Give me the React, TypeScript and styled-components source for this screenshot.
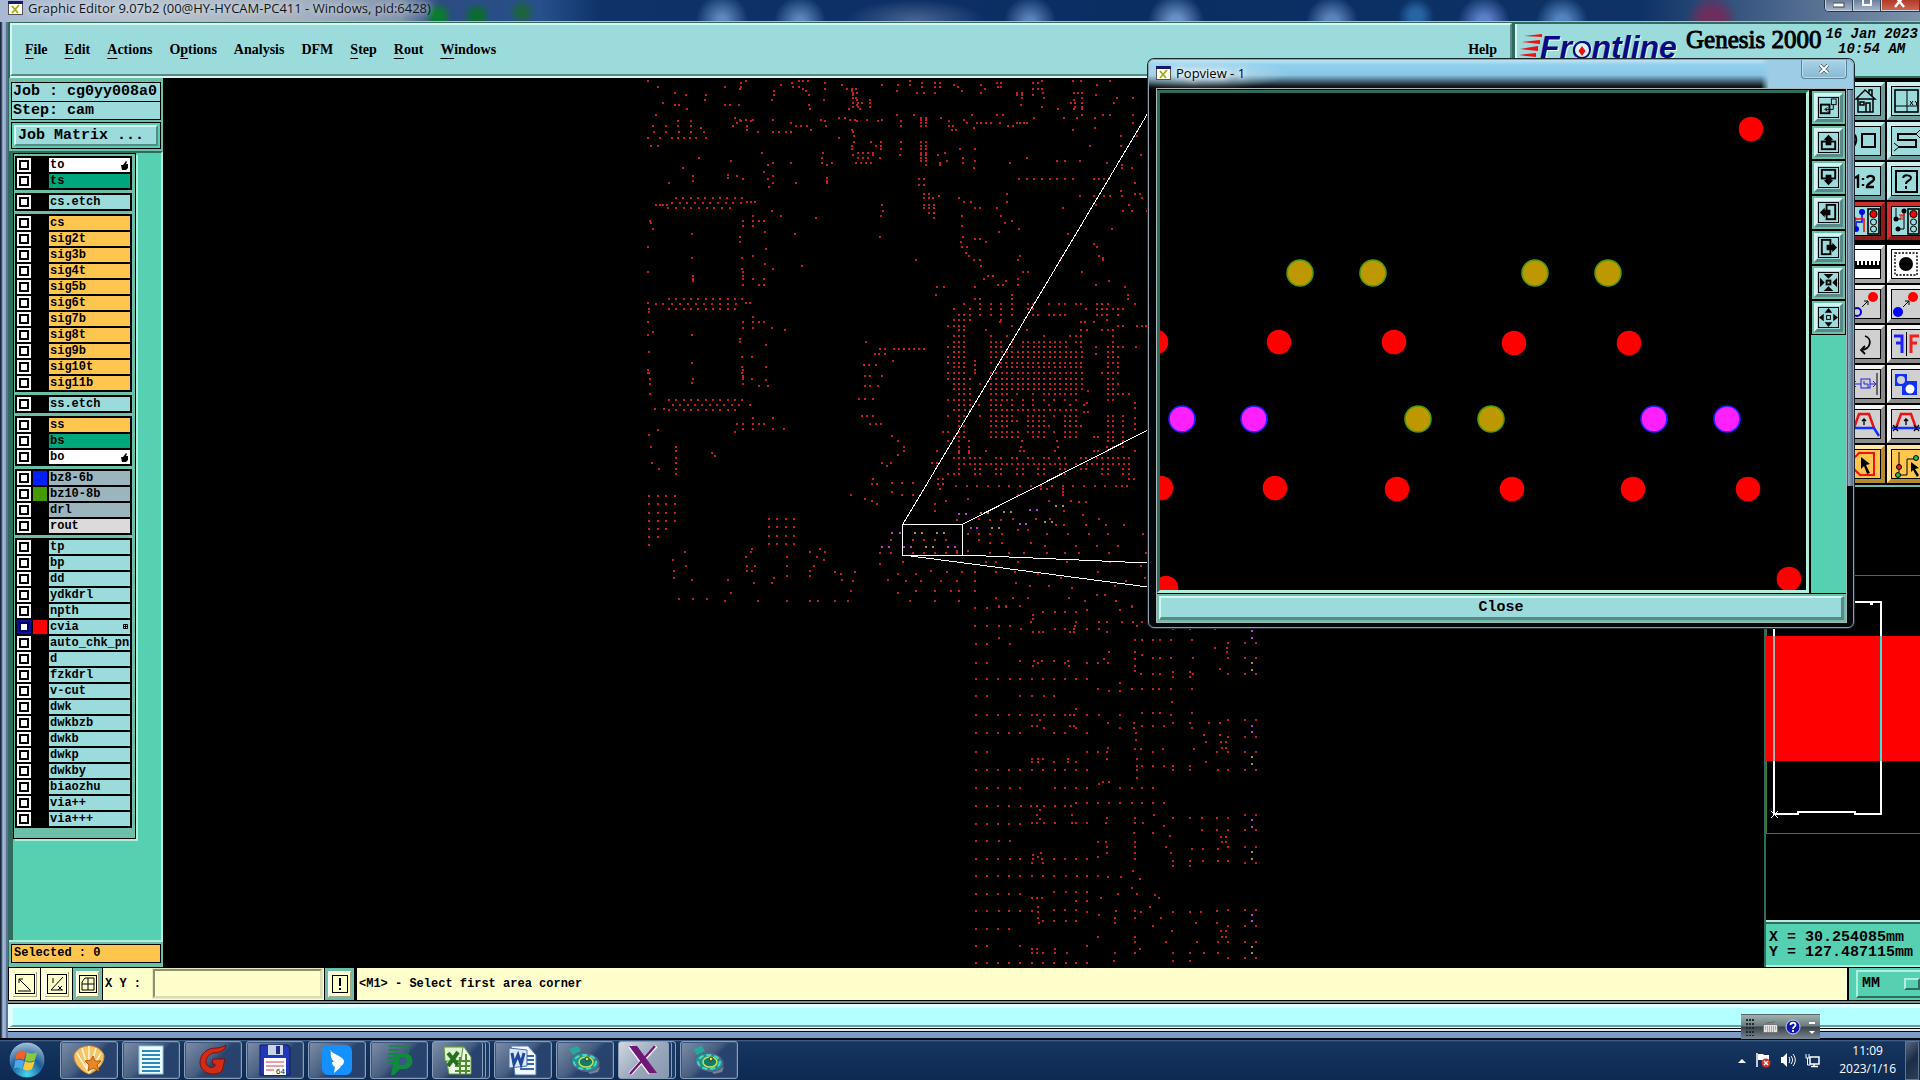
import React from "react";
import styled, { createGlobalStyle, css } from "styled-components";

const MONO = '"Liberation Mono", "DejaVu Sans Mono", monospace';
const SERIF = '"Liberation Serif", "DejaVu Serif", serif';
const SANS = '"Open Sans", "Noto Sans", sans-serif';

const c = {
  aqua: "#9bdbdb",
  aquaLight: "#d6f6f4",
  aquaDark: "#588888",
  green: "#55d0b0",
  greenMid: "#6cc0a8",
  greenLight: "#b2eede",
  greenDark: "#306c5e",
  orange: "#ffc64f",
  cream: "#ffffcc",
  grey: "#d0d0d0",
};

const Global = createGlobalStyle`
  * { box-sizing: border-box; }
  html, body { margin: 0; height: 100%; background: #0b2a55; overflow: hidden; }
  button, input, select { font: inherit; color: inherit; margin: 0; padding: 0; border: 0; border-radius: 0; background: none; }
  svg { display: block; flex: none; }
`;

const Desktop = styled.div`
  position: relative;
  height: 100vh;
  display: flex;
  flex-direction: column;
  overflow: hidden;
  color: #000;
`;

const EditorWindow = styled.main`
  flex: 1;
  min-height: 0;
  display: flex;
  flex-direction: column;
  padding: 0 0 6px 8px;
  background: linear-gradient(90deg, #1c2a40 0 1px, #a9bedb 3px, #86a0cb 6px, #3a4a60 7px, #7f9cc9 8px);
  border-bottom: 2px solid #050a14;
`;

const TitleBar = styled.header`
  height: 22px;
  flex: none;
  display: flex;
  align-items: flex-start;
  justify-content: space-between;
  margin-left: -8px;
  padding-left: 8px;
  border-bottom: 1px solid #a8bcd0;
  background:
    radial-gradient(circle at 438px 16px, #0c7a30 0 5px, transparent 14px),
    radial-gradient(circle at 477px 16px, #0c6a34 0 5px, transparent 14px),
    radial-gradient(circle at 522px 12px, #1c6440 0 4px, transparent 14px),
    radial-gradient(circle at 722px 20px, #6088bc 0 4px, transparent 26px),
    radial-gradient(circle at 800px 22px, #6088bc 0 4px, transparent 26px),
    radial-gradient(ellipse 70px 20px at 915px 20px, #4a6494 0, transparent 100%),
    radial-gradient(circle at 1030px 22px, #5c84bc 0 4px, transparent 26px),
    radial-gradient(circle at 1176px 22px, #6890c4 0 6px, transparent 28px),
    radial-gradient(circle at 1332px 22px, #5c84bc 0 6px, transparent 26px),
    radial-gradient(circle at 1416px 16px, #2664a4 0 6px, transparent 18px),
    radial-gradient(circle at 1484px 22px, #5c80c8 0 6px, transparent 26px),
    radial-gradient(circle at 1562px 22px, #5484c0 0 6px, transparent 26px),
    radial-gradient(circle at 1712px 20px, #6c2e5c 0 10px, transparent 26px),
    linear-gradient(90deg, #a9b9d4 0, #b8c3cf 140px, #a4b2c0 300px, #8494ac 400px, #2c4c80 440px, #27508c 540px, #0f3368 600px, #0a2e62 1150px, #0d3266 1640px, #5d7696 1830px, #7d93ac 100%);
`;

const TitleText = styled.div`
  display: flex;
  align-items: center;
  gap: 5px;
  height: 16px;
  font: 13px/16px ${SANS};
  color: #10161e;
  text-shadow: 0 0 6px #fff;
`;

const WindowControls = styled.div`
  display: flex;
  height: 12px;
  border: 1px solid #26364c;
  border-top: 0;
  border-right: 0;
  border-radius: 0 0 0 5px;
  overflow: hidden;
`;

const WindowControl = styled.button<{ $close?: boolean }>`
  width: ${(p) => (p.$close ? 39 : 28)}px;
  display: flex;
  justify-content: center;
  border-right: 1px solid #33445c;
  box-shadow: inset 1px -1px 0 #c4d0e0;
  background: ${(p) => (p.$close ? "linear-gradient(#b03a28, #d06a50)" : "linear-gradient(#6c809c, #a8b8cc)")};
`;

const Header = styled.div`
  height: 56px;
  flex: none;
  display: flex;
  background: ${c.greenDark};
`;

const raised = css`
  border-style: solid;
  border-width: 2px;
  border-color: ${c.aquaLight} ${c.aquaDark} ${c.aquaDark} ${c.aquaLight};
`;

const MenuBar = styled.nav`
  flex: 1;
  display: flex;
  align-items: center;
  gap: 17px;
  padding: 0 13px;
  background: ${c.aqua};
  ${raised}
  box-shadow: 0 2px 0 ${c.aquaLight};
  margin: 1px 2px 2px;
`;

const MenuItem = styled.button<{ $end?: boolean }>`
  font: bold 14px/20px ${SERIF};
  margin-left: ${(p) => (p.$end ? "auto" : 0)};
  u { text-underline-offset: 4px; text-decoration-thickness: 1px; }
`;

const Brand = styled.div`
  width: 405px;
  flex: none;
  margin: 2px 0 2px 1px;
  display: flex;
  align-items: flex-start;
  padding: 2px 0 0 2px;
  gap: 4px;
  background: ${c.aqua};
  border-left: 2px solid ${c.aquaLight};
  overflow: hidden;
`;

const Product = styled.div`
  font: 25px/28px ${SERIF};
  -webkit-text-stroke: 1px #000;
  white-space: nowrap;
`;

const Stamp = styled.div`
  font: italic bold 14px/15px ${MONO};
  white-space: nowrap;
  text-align: center;
  flex: none;
  padding-top: 1px;
`;

const Body = styled.div`
  flex: 1;
  min-height: 0;
  display: flex;
  background: #000;
`;

const Side = styled.aside`
  width: 155px;
  flex: none;
  display: flex;
  flex-direction: column;
  padding-top: 2px;
  background: ${c.greenMid};
  border-left: 1px solid ${c.greenDark};
`;

const JobInfo = styled.div`
  margin: 2px 2px 0;
  border: 1px solid #000;
  font: bold 15px/18px ${MONO};
  background: ${c.aqua};
`;

const JobLine = styled.div`
  height: 18px;
  padding-left: 1px;
  white-space: pre;
  overflow: hidden;
  & + & { border-top: 1px solid #000; }
`;

const MatrixFrame = styled.div`
  margin: 2px;
  padding: 2px;
  border: 1px solid #000;
  background: ${c.green};
`;

const MatrixButton = styled.button`
  display: block;
  width: 100%;
  height: 21px;
  text-align: left;
  padding-left: 2px;
  font: bold 15px/17px ${MONO};
  background: ${c.aqua};
  ${raised}
`;

const LayerArea = styled.div`
  flex: 1;
  min-height: 0;
  padding-left: 4px;
  background: linear-gradient(90deg, ${c.greenDark} 0 4px, ${c.green} 4px);
  border-top: 2px solid ${c.greenDark};
  border-right: 2px solid ${c.greenLight};
  border-bottom: 2px solid ${c.greenLight};
`;

const LayerPanel = styled.div`
  width: 123px;
  display: flex;
  flex-direction: column;
  gap: 3px;
  padding: 2px 2px 10px 1px;
  border: 1px solid #000;
  background: ${c.greenMid};
  box-shadow: 2px 2px 0 ${c.greenLight};
`;

const LayerGroup = styled.div`
  width: 117px;
  display: flex;
  flex-direction: column;
  gap: 2px;
  padding: 2px;
  background: #000;
`;

const LayerRow = styled.div`
  display: grid;
  grid-template-columns: 14px 14px 1fr;
  gap: 2px;
  height: 14px;
`;

const LayerTick = styled.input`
  appearance: none;
  width: 14px;
  height: 14px;
  background: #fff;
  border: 2px solid #fff;
  box-shadow: inset 0 0 0 2px #000;
  &:checked { border-color: #0a10a0; box-shadow: inset 0 0 0 2px #000060; }
`;

const Swatch = styled.span<{ $color?: string }>`
  background: ${(p) => p.$color || "#000"};
`;

const LayerName = styled.label<{ $bg: string }>`
  display: flex;
  justify-content: space-between;
  align-items: center;
  min-width: 0;
  height: 14px;
  padding-left: 1px;
  overflow: hidden;
  white-space: nowrap;
  font: bold 12px/14px ${MONO};
  background: ${(p) => p.$bg};
`;

const Selected = styled.div`
  height: 19px;
  margin: 2px 2px 4px;
  padding-left: 2px;
  border: 1px solid #000;
  font: bold 12px/17px ${MONO};
  background: ${c.orange};
`;

const Board = styled.section`
  flex: 1;
  min-width: 0;
  overflow: hidden;
  background: #000;
`;

const Dock = styled.aside`
  width: 156px;
  flex: none;
  display: flex;
  flex-direction: column;
  overflow: hidden;
  border-left: 2px solid ${c.greenDark};
`;

const ToolBox = styled.div`
  display: grid;
  grid-template-columns: 40px 40px;
  grid-auto-rows: 40px;
  padding: 4px 0 3px 81px;
  background: #000;
  border-bottom: 2px solid ${c.greenMid};
`;

const toneOf = {
  aqua: [c.aqua, "#c8f0ee", "#6c9c9c"],
  red: ["#9bdbdb", "#d03030", "#8c1c1c"],
  white: ["#ffffff", "#ffffff", "#a8a8a8"],
  grey: [c.grey, "#f4f4f4", "#8c8c8c"],
  orange: [c.orange, "#ffe6a8", "#b88a30"],
};
type Tone = keyof typeof toneOf;

const Tool = styled.button<{ $tone: Tone; $gap?: boolean }>`
  width: 38px;
  height: 38px;
  margin-top: ${(p) => (p.$gap ? 3 : 0)}px;
  border-style: solid;
  border-width: 4px;
  border-color: ${(p) => {
    const [, l, d] = toneOf[p.$tone];
    return `${l} ${d} ${d} ${l}`;
  }};
  background: ${(p) => toneOf[p.$tone][0]};
`;

const Overview = styled.div`
  flex: 1;
  min-height: 0;
  background: #000;
  overflow: hidden;
`;

const Coords = styled.div`
  height: 47px;
  flex: none;
  padding: 8px 0 0 3px;
  border-top: 2px solid ${c.greenLight};
  border-bottom: 2px solid ${c.greenLight};
  box-shadow: inset 0 2px 0 ${c.greenDark};
  background: ${c.green};
  font: bold 15px/15px ${MONO};
  white-space: pre;
`;

const CommandBar = styled.div`
  height: 34px;
  flex: none;
  display: flex;
  padding: 1px 0 1px 1px;
  gap: 1px;
  background: #000;
`;

const CommandButton = styled.button<{ $framed?: boolean }>`
  width: ${(p) => (p.$framed ? 29 : 31)}px;
  display: flex;
  align-items: center;
  justify-content: center;
  background: ${c.cream};
  border: 3px solid ${(p) => (p.$framed ? c.greenMid : c.cream)};
  box-shadow: inset 1px 1px 0 #fff, inset -1px -1px 0 #a8a888;
`;

const EntryField = styled.div`
  display: flex;
  width: 221px;
  background: ${c.cream};
  font: bold 12px/32px ${MONO};
  label { width: 48px; padding-left: 2px; }
  input {
    flex: 1;
    min-width: 0;
    margin: 1px 2px 2px 2px;
    padding-left: 4px;
    border-style: solid;
    border-width: 2px;
    border-color: #90906c #dcdcb4 #dcdcb4 #90906c;
    box-shadow: 0 0 0 1px #e8e8c0;
  }
`;

const Prompt = styled.div`
  flex: 1;
  margin-left: 2px;
  padding-left: 2px;
  font: bold 12px/32px ${MONO};
  background: ${c.cream};
`;

const UnitFrame = styled.div`
  width: 72px;
  padding: 2px 0 2px 7px;
  border-left: 1px solid #000;
  background: ${c.green};
`;

const UnitPick = styled.div`
  display: flex;
  align-items: center;
  height: 28px;
  border-style: solid;
  border-width: 2px 0 2px 2px;
  border-color: ${c.greenLight} ${c.greenDark} ${c.greenDark} ${c.greenLight};
  select {
    appearance: none;
    width: 48px;
    padding-left: 4px;
    font: bold 15px/20px ${MONO};
  }
  &::after {
    content: "";
    width: 13px;
    height: 8px;
    border-style: solid;
    border-width: 2px;
    border-color: ${c.greenLight} ${c.greenDark} ${c.greenDark} ${c.greenLight};
  }
`;

const MessageBar = styled.div`
  height: 31px;
  flex: none;
  padding: 3px 0 3px 1px;
  background: linear-gradient(#7d9494 0 2px, #000 2px 3px, #e2ffff 3px 27px, #000 27px 28px, #d2f2f2 28px 30px, #000 30px);
`;

const MessageField = styled.div`
  height: 23px;
  border-left: 4px solid #e2ffff;
  border-top: 4px solid #e2ffff;
  border-bottom: 2px solid #6a9c9c;
  background: #b4ffff;
`;

/* popview window */

const PopWindow = styled.section`
  position: absolute;
  left: 1148px;
  top: 59px;
  width: 706px;
  height: 569px;
  display: flex;
  flex-direction: column;
  padding: 0 6px 4px 7px;
  border: 1px solid #8ba0ac;
  border-radius: 6px;
  background:
    linear-gradient(90deg, transparent 0 698px, #8db0c8 699px, #5a6c80 100%) 0 30px / 100% 396px no-repeat,
    radial-gradient(ellipse 90px 16px at 50px 14px, #d8e8f0c0, transparent) no-repeat,
    linear-gradient(90deg, transparent 0 612px, #9ccce6 620px) 0 0 / 100% 29px no-repeat,
    linear-gradient(#bfe4f2 0, #8fd0ee 5px, #8ac6e4 15px, #50788c 20px, #14181c 26px, #000 30px, #08090c 100%);
  box-shadow: 0 0 0 1px #1c2830;
`;

const PopTitle = styled.header`
  height: 28px;
  flex: none;
  display: flex;
  justify-content: space-between;
  align-items: flex-start;
`;

const PopTitleText = styled.div`
  display: flex;
  align-items: center;
  gap: 5px;
  height: 26px;
  font: 13px/16px ${SANS};
  text-shadow: 0 0 5px #fff, 0 0 7px #fff, 0 0 8px #cfe6f0;
`;

const PopClose = styled.button`
  width: 46px;
  height: 19px;
  display: flex;
  align-items: center;
  justify-content: center;
  border: 1px solid #5f8296;
  border-top: 0;
  border-radius: 0 0 4px 4px;
  box-shadow: inset 0 0 0 1px #b8dcec;
  background: linear-gradient(#a8d4ea, #88b8d2);
`;

const PopContent = styled.div`
  flex: 1;
  min-height: 0;
  display: flex;
  flex-direction: column;
  border: 1px solid #a8b8b8;
  background: #000;
`;

const PopMain = styled.div`
  flex: 1;
  min-height: 0;
  display: flex;
  gap: 2px;
  padding-top: 1px;
`;

const PopView = styled.div`
  flex: 1;
  min-width: 0;
  border-style: solid;
  border-width: 3px;
  border-color: ${c.greenDark} ${c.greenLight} ${c.greenLight} ${c.greenDark};
  overflow: hidden;
`;

const PopTools = styled.div`
  width: 35px;
  background: ${c.green};
`;

const PopTool = styled.button`
  display: block;
  width: 35px;
  height: 35px;
  padding: 2px;
  border: 1px solid #000;
  background: ${c.greenMid};
  span {
    display: block;
    height: 29px;
    padding: 1px;
    border-style: solid;
    border-width: 3px;
    border-color: ${c.aquaLight} ${c.aquaDark} ${c.aquaDark} ${c.aquaLight};
    background: ${c.aqua};
  }
`;

const CloseFrame = styled.div`
  height: 28px;
  flex: none;
  margin-top: 1px;
  padding: 2px;
  background: ${c.greenMid};
  button {
    width: 100%;
    height: 24px;
    font: bold 15px/18px ${MONO};
    background: ${c.aqua};
    ${raised}
    border-right-width: 3px;
    border-bottom-width: 3px;
  }
`;

/* taskbar */

const Taskbar = styled.footer`
  height: 40px;
  flex: none;
  display: flex;
  align-items: center;
  background: linear-gradient(#4a6a92 0, #17365f 2px, #11305a 18px, #0d2a52 100%);
`;

const StartButton = styled.button`
  width: 60px;
  height: 40px;
  padding-left: 8px;
`;

const TaskList = styled.div`
  display: flex;
  gap: 4px;
  flex: 1;
`;

const TaskButton = styled.button<{ $active?: boolean; $stack?: boolean }>`
  width: 58px;
  height: 38px;
  display: flex;
  align-items: center;
  justify-content: center;
  border: 1px solid #8a9db8;
  border-radius: 3px;
  padding-right: ${(p) => (p.$stack ? 8 : 0)}px;
  box-shadow: ${(p) =>
    p.$stack
      ? "inset -3px 0 0 #1c3a62, inset -4px 0 0 #8a9db8, inset -6px 0 0 #1c3a62, inset -7px 0 0 #8a9db8"
      : "inset 0 0 0 1px #3c5578"};
  background: ${(p) =>
    p.$active
      ? "linear-gradient(135deg, #d2d8e2 0, #9aa8bc 50%, #8494ac 100%)"
      : "linear-gradient(135deg, #7d8fa8 0, #485f82 45%, #28446e 55%, #26426c 100%)"};
`;

const Tray = styled.div`
  display: flex;
  align-items: center;
  gap: 9px;
  padding-right: 18px;
`;

const Clock = styled.div`
  font: 12px/18px ${SANS};
  color: #fff;
  text-align: center;
  padding-right: 9px;
`;

const ShowDesktop = styled.button`
  width: 14px;
  height: 39px;
  margin-right: 1px;
  border: 1px solid #62748e;
  background: linear-gradient(135deg, #56687e, #1b2c46 50%, #2c3f5a);
`;

const LanguageBar = styled.div`
  position: absolute;
  right: 100px;
  bottom: 41px;
  width: 79px;
  height: 25px;
  display: flex;
  align-items: center;
  justify-content: space-between;
  padding: 0 5px;
  border-top: 1px solid #5c6868;
  background: linear-gradient(#a0b0b0 0, #6c7a7c 11px, #38434a 12px, #7c8690 100%);
`;

/* ---------- layer data ---------- */

type Layer = { name: string; bg?: string; color?: string; on?: boolean; mark?: "hand" | "grid" };
const O = c.orange;
const layerGroups: Layer[][] = [
  [{ name: "to", bg: "#fff", mark: "hand" }, { name: "ts", bg: "#00a67c" }],
  [{ name: "cs.etch" }],
  ["cs", "sig2t", "sig3b", "sig4t", "sig5b", "sig6t", "sig7b", "sig8t", "sig9b", "sig10t", "sig11b"].map((name) => ({ name, bg: O })),
  [{ name: "ss.etch" }],
  [{ name: "ss", bg: O }, { name: "bs", bg: "#00a67c" }, { name: "bo", bg: "#fff", mark: "hand" }],
  [
    { name: "bz8-6b", bg: "#9bb5be", color: "#0020ff" },
    { name: "bz10-8b", bg: "#9bb5be", color: "#459a04" },
    { name: "drl", bg: "#9bb5be" },
    { name: "rout", bg: "#dcdadb" },
  ],
  [
    { name: "tp" }, { name: "bp" }, { name: "dd" }, { name: "ydkdrl" }, { name: "npth" },
    { name: "cvia", color: "#ff0000", on: true, mark: "grid" },
    { name: "auto_chk_pnl" }, { name: "d" }, { name: "fzkdrl" }, { name: "v-cut" }, { name: "dwk" },
    { name: "dwkbzb" }, { name: "dwkb" }, { name: "dwkp" }, { name: "dwkby" }, { name: "biaozhu" },
    { name: "via++" }, { name: "via+++" },
  ],
];

/* ---------- drill data: "y: x x a-b/step" in third-of-a-pixel units ---------- */

const upper = `
3:24 318 478 490 505 810 1206 1299 1323 1410|10:303 457 555 846 885 900 1070 1083 1180 1194|16:423 606 727 773 810 942 1022 1371
21:54 255 303 459 476 846 885 900 954 1073 1083|26:300 488 555 620 636 648 1036 1180 1194 1206|33:403 497 636 770 965
39:105 640 651 831 851 885 1022 1131 1146 1209 1303 1315 1327|46:138 198 403 507 639 1131 1146 1180 1369|54:639 648 1146 1212 1327 1431 1479
61:195 396 552 651 690 1303|68:69 639 654 665 690 1293 1306 1327 1422|74:105 117 255 270 297 507 651 1143|80:639 654 690 1206 1306 1327
88:141 510 627 660 1254 1303 1327|106:48 770 822 996 1071 1089 1327 1389 1410 1479|113:285 597 615 842 857 903 1182 1272 1311 1365
119:300 318 339 399 543 630 645 680 726 842 857 972|124:114 153 303 333 555 651 713 782 927|129:291 453 842 857 981 1010-1064/14 1080 1131-1161/10 1479
138:39 78 114 153 279 320 468-500/16 558 782 842 857 927 939 1104 1118|144:183 1002 1365|150:320 512 636 935 948 1299
155:42 78 117 153 192 354 399 417 438 452 639|168:642 1443 1490|175:24 60 96-180/18 198 597|186:642 693 723 782 842 857
197:33 54 636 708 723 842 857 1350 1443|208:636 723 782 842 857 960 1005|218:366 549 654-700/15 842 857 915|226:639 698 780 842 857 893 1502
235:177 546 654-698/15 720 842 857 968 1161|242:273 843 857 921 1005 1250 1275 1320|249:399 453 546 576 648-693/15 900 968 1110 1401
256:384 561 857 900 1446|264:129 1002 1446 1476|275:372|284:264|289:158 291 399|293:264 561|297:309 384 1137-1300/23 1362-1410/15 837 852|302:158 561
308:87 399 468 561 1485|315:837 852|321:387|334:1443|342:852 867 1101 1485 1500|348:897 1320 1362 1392 1410 1446
354:108-310/22 852 867 879 956 1506|366:320 333 345 972 993 1101|369:96-312/23|375:48 60 69 81 852 867 882 726 1368 1467
384:84 108-290/23 852 867 882 1005 1020 1072 1269|393:396 729 1449 1476 1520|399:867 882|409:339 423 723 966 1083|415:528 882
422:30 309 339 357 372 1116|430:33 1095|439:309 339 966|448:39 1137 1416|455:375 1077|462:156 465 1284|470:300 720 969|478:1005 1020
485:300 963 1038|492:1362|501:24 966 981 1371|508:378|519:978|527:339 987 1140 1377|534:156 306 1263 1389|541:827 1002 1020 1134 1389
552:375|559:486 1022|566:306 399|576:24 309 1149 1164 1327|588:158 309 1044 1059|596:158 309 339 372 1032 1134|604:158 1098 1407
614:309 357 372 1074 1089 1134 1368|622:891 912 1005 1455|645:888 1116 1464|657:87-310/22 1005 1020 1116 1464|669:24 318 330
672:48 69 96-300/24 972 1020 1053 1083 1116 1164 1179 1227 1257 1275 1308 1323 1371 1386 1404 1485|687:27 87-290/22 942 990 1020 1053 1083 1116 1164 1179 1338 1371 1386 1401 1419 1434 1449
696:27|705:957 972 990 1020 1053 1083 1116 1179 1194 1227-1276/16 1371 1386 1401 1434|711:339|720:942 957 972 990 1083 1152 1401|727:24 309 339 357 372 1080 1323 1334 1362
738:924 942 957 972 1116 1434 1449 1490 1506 1518|744:309 339 396|751:435 957 972 1038 1161 1323 1341 1386 1404 1419|757:39|764:24 156
768:942 957 972 1053 1101 1212 1290 1308 1323 1419|776:300|786:300 678 942 957 972 1053 1068 1083 1116 1149-1290/16 1308 1323 1419|796:378
801:924 942 957 972 1053 1068 1083 1116 1149-1292/16 1323 1368 1404 1419 1434 1449 1488|807:720 735 762-865/15|815:27 942 957 972 1053-1325/16 1404 1419|823:705 717 735 1368
831:306 336 924 942 957 972 1053-1325/16 1404 1419 1434|843:759 1005|849:156 924 942 957 972 1053 1083-1325/16 1404 1419 1434|855:672 687 708 1005|862:306 378 942 957 972 1068-1325/16 1404 1434
870:24 309 1005|879:27 306 924 942 957 972 1005 1053-1325/16 1386 1404 1419 1434|889:309 675 690 727|897:30 158 336 942 957 972 1053-1325/16 1404 1419`;

const middle = `
9:24 306 942 957 972 1005 1053-1325/16 1386 1404 1419 1434|20:309|27:30 158 309 336 924 942 957 972 990 1053-1325/16 1404 1419|30:378|38:156
42:30 309 942 957 972 1020 1053-1325/16 1404 1419 1434|48:357 384 675 690 714|57:942-975/15 990 1053-1325/16 1404 1419|63:1344|72:30 957 972 990 1053-1102/16 1131 1179 1212-1292/16 1308 1404 1419 1434 1449 1467
87:657 675 699|90:87-310/22 924 942 957 972 990 1053-1118/16 1149 1179 1212 1242 1275 1308 1404 1419|99:1341 1485|104:99-315/22 330 957 972 990 1017 1053 1068 1083 1116 1149 1179 1227 1290 1332|114:1485
118:45 72|121:87-290/22 942-990/16 1053-1310/16|126:1332 1344|137:666 681 699 924 957 972 1020 1053-1118/16 1164-1212/16 1242 1275-1310/16 1404 1419 1449|145:339 399 1485
153:957 972 1053-1118/16 1131 1164-1214/16 1275-1310/16 1404 1419 1449|162:291 309 339 357 372 690 708 723 1485|168:957 972 1053-1102/16 1164-1228/16 1275-1325/16 1404 1419 1449|177:309 339 399 432 1485
181:54|187:285 909 924 957 972 1053-1134/16 1164-1214/16 1242 1275-1310/16 1404 1419 1449|195:27|198:756|202:942 957 972 1053-1134/16 1179-1214/16 1275-1310/16 1362 1374 1404 1419 1449
213:774 924 957 987 1146 1251 1404 1419 1449|231:33 108 792 957 987 1143 1254 1401 1419 1449|242:108 792 891 957 987 1038 1140 1152 1245 1362 1374 1401 1485|249:216 957 987|258:225|255:774
264:108 942 957-1036/16 1068 1083 1116 1131 1164 1179 1212 1227 1257 1275 1323-1468/16|278:36 108 727 753 876 891|283:957-1292/16 1308-1468/16|288:741 891
297:57 108 957 1005 1020 1068 1083 1131 1149 1194 1212 1260 1275 1323 1338 1386 1404 1449 1467|311:108 924 942 957 1005 1020 1068 1083 1131 1149 1194 1212 1260 1275 1386 1404 1449 1467
327:699 894 909 1467 1482|338:756 786 819|343:696 711 894 909|348:948-1467/32 1446|358:900 1203 1221 1269|367:756 1269|374:633 786 819 1134 1269
378:27 54 78 105|387:675 984|393:696 918 1227 1293|402:27 54 78 105 711 885|396:1317 1338|423:885 1272|429:27 54 78 105|435:1329|453:27 54 78 105|477:27 54 78|501:27 54|525:27
447:387 411 438 462 1017 1119 1188 1230 1377|451:951 1050 1083|471:387 411 438 462|498:387 411 438 462|522:387 411 438 462|464:1248 1272 1338 1398 1452|480:1134 1164
493:984 1017 1050 1086 1221 1284 1347 1404 1509|510:753 819 852 885 918 1017|519:1050 1086 1173|528:1215 1308 1371 1434|536:336 540|543:984 951|549:720 753 819 852 885 918 951 1050 1107 1152 1221 1275 1317 1407 1518
547:135 333 510 555|560:318 441 531|571:99 552|576:789 963 1038 1068 1134 1281 1410|582:720|587:138 321 345 441 522 1503|602:102 321 336 510 873|606:585 645 921 966 1005 1068 1125 1374|612:603 774 828 1194
618:441 510|624:102 402 1263 1515|630:156 264 606 744|633:639 798 843 903 951 1005 1458|640:342 396 1128|647:1170 1227 1425|654:1296|663:633 828 885 933 957 1005|668:273 774|674:1371 1395
684:1068 1119 1164 1288|688:117 159 201|692:255 354 441 510 534 585 624 810 885 957 1335 1428|711:1077 1098 1476|714:1005 1041`;

const lower = `
3:57 435|18:178 198 240 576|23:105 141|30:441 540|37:309 345 375 408|45:279|57:279|66:273 408 477 546 579 501 606|77:105 141 177 210 405 591|87:243 345 375 403 441 477 699 750 825
97:279 297 309 390 403 501|113:177|120:585 606 639 660 693 756|128:864 915 948|131:108 141 210|143:825 861|156:507 585 861|164:606|174:639 660 693 759 864 915 948|178:492 585
183:240 282 306 342 384|190:108 141 294 375 441 474 504|197:279 387 585|207:840|213:585|217:699 750|223:603 639 660 759 864 915 948|231:699 750|238:108 141 174 210 240 276 309 342 375 408 441
249:540|267:474 576 606 639 657 693 756|272:507 540|289:108 141 240 276 312 342|306:696|327:408|338:606 639 660 756|345:108 141 174 207 240 276 291 312 342 375 390 402 441 477 540 693
361:300 864 915 948|370:504 582 699 750 807 840|377:276 291 390 402 606 639 672|385:312 408 540 582 756|400:108 141 174 207 240 342 375 441 588|405:792 840|411:864 915 948|420:588|427:798 843 858
443:504 846 858|447:585 603 669 762|457:108 141 441 474 501 639 831 864 915 948|476:276 294 309 384 501 591|487:276 294 342 384 408 798|499:591 606 639 672 699 750|511:108 141 174 207 240 276 309 345 375 408 441 591 699 750 834 864 915 948
533:591|547:489 507|551:477|565:108 141 174 210 240 345 375 408 441 540 576 606 639|609:408 441 474 507 540 576 606 639 672|617:108 141 174 207 243 273 291 312 345 375 393|630:300|645:291 396 642 915 948
653:501 585 699 750 786 831 864|658:300|669:276 291 312 345 396 408 441 498 585 609|672:108 141 174 207 240|678:672|689:786 831 864 915 948|700:582 639|708:690|712:843 858|726:846 858 474 498 585|722:108 141 177 210
741:501 585 678 864 915 948|748:756 789 834|758:303 501 585 693|765:279|771:294 474|778:108 141 174 210 240 279 306 342 375 408 441 585|784:699 750 789 834 864|790:276 309 915 948|798:699 750|812:579
828:108 141 174 207 240 276 309 342 378 411 441 474|832:504 543|837:600|864:576|875:342 378 408 441|881:108 141 174 207 240 534 591|885:645|894:276 291 306 483 657|903:408 441|920:294 630
929:342 375 408 864 915 948|933:108 141 177 207 240 276 528 585 831|937:294 441 603 699 750 783|945:477|954:294 525 585 663|963:309 342 378 408|969:297 525 768 831|979:639 864 915 948|986:108 141 174 207
992:696 843 858|1010:474 585 846 858|1026:585 678 770 834 864 915 948|1038:108 141 240 441|1046:276 291 345 600|1060:276 291 309 345 381 525 585 699 750 792 834|1075:864 915 948|1082:522 699 750
1089:108 141 174 207 240 276 309 342 378 408 441`;

const plot = (src: string, ox: number, oy: number) => {
  let d = "";
  src.trim().split(/[|\n]/).forEach((row) => {
    const [y, xs] = row.split(":");
    xs.trim().split(/\s+/).forEach((t) => {
      const m = t.match(/^(\d+)-(\d+)\/(\d+)$/);
      const list: number[] = [];
      if (m) for (let v = +m[1]; v <= +m[2]; v += +m[3]) list.push(v);
      else list.push(+t);
      list.forEach((x) => {
        d += `M${Math.round(ox + x / 3) - 1} ${Math.round(oy + +y / 3) - 1}h2v2h-2z`;
      });
    });
  });
  return d;
};

const redDots = plot(upper, 640, 80) + plot(middle, 640, 370) + plot(lower, 940, 600);
const magentaDots =
  plot("489:757 780|531:726 747 792 813 924 945|431:957 978|474:993 1011|462:1140 1158|421:1170 1191", 640, 370) +
  plot("93:936|114:936|378:936|396:936|660:936|681:936|945:936|963:936", 940, 600);
const goldDots =
  plot("489:825 846 891 912|531:858 879|430:1022 1044|426:1092 1113|474:1056 1077|456:1215 1236|408:1248 1269", 640, 370) +
  plot("189:936|210:936|472:936|492:936|756:936|777:936|1041:936|1059:936", 940, 600);

const BoardDrawing = () => (
  <svg width="1601" height="889" viewBox="163 78 1601 889" shapeRendering="crispEdges">
    <path d={redDots} fill="#c81c20" />
    <path d={magentaDots} fill="#c03ad8" />
    <path d={goldDots} fill="#a8902c" />
    <g stroke="#fff" fill="none" strokeWidth="1">
      <rect x="902.5" y="524.5" width="60" height="31" />
      <path d="M903 524L1148 113M963 524L1148 430M963 555L1148 563M903 555L1148 587" />
    </g>
  </svg>
);

const popDots: [number, number, string][] = [
  [1751, 129, "r"],
  [1300, 273, "g"], [1373, 273, "g"], [1535, 273, "g"], [1608, 273, "g"],
  [1156, 342, "r"], [1279, 342, "r"], [1394, 342, "r"], [1514, 343, "r"], [1629, 343, "r"],
  [1182, 419, "m"], [1254, 419, "m"], [1418, 419, "g"], [1491, 419, "g"], [1654, 419, "m"], [1727, 419, "m"],
  [1161, 488, "r"], [1275, 488, "r"], [1397, 489, "r"], [1512, 489, "r"], [1633, 489, "r"], [1748, 489, "r"],
  [1166, 588, "r"], [1789, 579, "r"],
];

const PopDrawing = () => (
  <svg width="650" height="498" viewBox="1160 93 650 498">
    {popDots.map(([x, y, k], i) => (
      <circle
        key={i}
        cx={x}
        cy={y}
        r={k === "r" ? 12.3 : 13}
        fill={k === "r" ? "#f00" : k === "g" ? "#bd9800" : "#ff20ff"}
        stroke={k === "r" ? "none" : k === "g" ? "#4c9a0a" : "#1a20ff"}
        strokeWidth="1.6"
      />
    ))}
  </svg>
);

const OverviewDrawing = () => (
  <svg width="154" height="433" viewBox="1766 487 154 433" shapeRendering="crispEdges">
    <path d="M1766.5 575.5H1920M1766.5 575V833.5H1920" stroke="#3f7a34" fill="none" />
    <rect x="1766" y="636" width="154" height="125" fill="#f00" />
    <path d="M1774 602H1881V814H1855V812H1798V814H1774Z" stroke="#fff" strokeWidth="2" fill="none" />
    <path d="M1870 604h3" stroke="#fff" strokeWidth="2" />
    <path d="M1774 636V761" stroke="#b0b0b0" strokeWidth="2" />
    <path d="M1881 636V761" stroke="#40e0e0" strokeWidth="2" />
    <path d="M1771 811l7 7M1778 811l-7 7" stroke="#fff" />
  </svg>
);

/* ---------- small drawings ---------- */

const XAppIcon = () => (
  <svg width="15" height="14" viewBox="0 0 15 14">
    <rect x=".5" y=".5" width="14" height="13" fill="#fffff0" stroke="#555" />
    <rect x="0" y="0" width="15" height="3" fill="#181870" />
    <path d="M4 5l6 7M11 4l-7 8" stroke="#a8a820" strokeWidth="1.8" />
  </svg>
);

const Logo = () => (
  <svg width="163" height="38" viewBox="1521 29 163 38">
    <g fill="#f01010">
      <path d="M1526 39l18-2v3zM1524 45l18-2v4zM1522 52l18-3v5zM1520 58l18-2v4z" />
    </g>
    <text x="1543" y="62" fontFamily="Liberation Sans, sans-serif" fontWeight="bold" fontStyle="italic" fontSize="32" fill="#e8ffff">Frontline</text>
    <text x="1542" y="61" fontFamily="Liberation Sans, sans-serif" fontWeight="bold" fontStyle="italic" fontSize="32" fill="#0a0a86">Frontline</text>
    <ellipse cx="1584" cy="53" rx="8" ry="8" fill="#d8f4f8" stroke="#0a0a86" strokeWidth="2" />
    <path d="M1584 49l3.500 5-3.500 5-3.500-5z" fill="#f01010" />
  </svg>
);

const K = { fill: "none", stroke: "#000", strokeWidth: 1 } as const;

type ToolDef = { label: string; tone: Tone; art: React.ReactNode };
const traffic = (
  <>
    <rect x="17" y="3" width="11" height="25" {...K} strokeWidth={1.6} />
    <circle cx="22.500" cy="8" r="3.600" fill="#f00" stroke="#000" />
    <circle cx="22.500" cy="16" r="3" {...K} />
    <circle cx="22.500" cy="23" r="3" {...K} />
  </>
);
const tools: ToolDef[] = [
  { label: "Home", tone: "aqua", art: <g {...K} strokeWidth={1.5}><path d="M5 13l9-9 10 9zM7 13v13h15V13M18 7V4h3v6" /><rect x="9" y="16" width="4" height="3" /><path d="M15 26v-9h4v9" /></g> },
  { label: "Layout", tone: "aqua", art: <g {...K} strokeWidth={1.6}><rect x="4" y="4" width="23" height="22" /><path d="M16 4v22M4 20h23" strokeWidth={1} /><path d="M19 15l3 4M22 15l-3 4M24 15l1.500 2 1.500-2M25.500 17v2" strokeWidth={1} /></g> },
  { label: "Rotate copy", tone: "aqua", art: <g {...K} strokeWidth={2}><path d="M1 8c6-1 6 14-2 13M1 8v4" /><rect x="11" y="8" width="13" height="13" /></g> },
  { label: "Snake", tone: "aqua", art: <g {...K} strokeWidth={2}><path d="M25 8H7v6h18v7H8" /><path d="M29 4l-4 4 4 4M3 17l5 4-5 4" strokeWidth={1} /></g> },
  { label: "Scale", tone: "aqua", art: <g {...K} strokeWidth={2.400}><path d="M4 12l3-2v12M12 12v2M12 18v2M16 12c1-3 7-3 7 1 0 3-7 4-7 8h7" /></g> },
  { label: "Query", tone: "aqua", art: <g {...K} strokeWidth={2}><rect x="5" y="5" width="21" height="21" /><path d="M12 12c1-4 8-3 8 0 0 3-5 2-5 6M15 20v3" /></g> },
  { label: "Nets", tone: "red", art: <g><path d="M11 4v12H5v8" fill="none" stroke="#00f" strokeWidth="1.500" /><path d="M0 13h13v13" fill="none" stroke="#f00" strokeWidth="1.500" /><circle cx="11" cy="6" r="3" fill="#00f" /><circle cx="3" cy="13" r="2.500" fill="#f00" /><circle cx="5" cy="23" r="3" fill="#00f" />{traffic}</g> },
  { label: "Net compare", tone: "red", art: <g><path d="M5 2v11M13 5v18H7M5 13h5" {...K} /><path d="M8 9h6M10 9v5M12 9v5" stroke="#f00" /><circle cx="13" cy="5" r="2.500" /><circle cx="5" cy="13" r="2.500" /><circle cx="7" cy="23" r="2.500" />{traffic}</g> },
  { label: "Measure", tone: "white", art: <path d="M0 12h2v4h2v-4h2v4h2v-4h2v4h2v-4h2v4h2v-4h2v4h2v-4h2v4h2v-4h2v4h2v-4h2v8H0z" /> },
  { label: "Select pad", tone: "white", art: <g><rect x="4" y="4" width="22" height="22" {...K} strokeWidth={1.400} strokeDasharray="2 1.500" /><circle cx="15" cy="15" r="7" /></g> },
  { label: "Move", tone: "grey", art: <g><circle cx="6" cy="23" r="4" fill="none" stroke="#00f" strokeWidth="2" /><circle cx="22" cy="8" r="5" fill="#f00" /><path d="M11 18l6-6M13 12h4v4" {...K} /></g> },
  { label: "Copy", tone: "grey", art: <g><circle cx="7" cy="23" r="5" fill="#00f" /><circle cx="22" cy="8" r="5" fill="#f00" /><path d="M12 18l6-6M14 12h4v4" {...K} /></g> },
  { label: "Rotate", tone: "grey", art: <path d="M14 7c7 2 7 13-4 14M14 17l-4 4 4 4" {...K} strokeWidth={1.800} /> },
  { label: "Mirror", tone: "grey", art: <g fill="none" strokeWidth="3"><path d="M3 7h8v17M5 14h6" stroke="#2020ff" /><path d="M28 7h-8v17M26 14h-6" stroke="#f02020" /><path d="M15.500 3v24" stroke="#000" strokeWidth="1" /></g> },
  { label: "Resize", tone: "grey", art: <g fill="none" stroke="#2020e0"><path d="M0 4v22M26 4v22" stroke="#000" /><rect x="10" y="10" width="9" height="9" /><path d="M2 15h8M19 15h6M5 12l-3 3 3 3M22 12l3 3-3 3M13 12v3h4M17 15v4" /></g> },
  { label: "Shapes", tone: "grey", art: <g><rect x="4" y="5" width="12" height="12" fill="#1030ff" /><rect x="11" y="12" width="15" height="14" fill="#1030ff" /><circle cx="10" cy="11" r="4" fill="#d0d0d0" /><circle cx="19" cy="20" r="4.500" fill="#fff" /></g> },
  { label: "Stretch arc", tone: "grey", art: <g fill="none"><path d="M3 19l5-14h10l5 14" stroke="#f01010" strokeWidth="2.500" /><path d="M0 19h23l5 8" stroke="#1030ff" strokeWidth="2.500" /><path d="M13 16v-6M11 12l2-2 2 2" stroke="#000" strokeWidth="1.300" /></g> },
  { label: "Stretch line", tone: "grey", art: <g fill="none"><path d="M5 19l5-14h10l5 14" stroke="#f01010" strokeWidth="2.500" /><path d="M1 19h28" stroke="#1030ff" strokeWidth="2.500" /><path d="M15 16v-6M13 12l2-2 2 2M2 16l5 6M7 16l-5 6M23 16l5 6M28 16l-5 6" stroke="#000" strokeWidth="1.300" /></g> },
  { label: "Select by polygon", tone: "orange", art: <g><path d="M3 9l5-5h15v22H9l-6-6z" fill="none" stroke="#f01010" strokeWidth="2" /><path d="M10 8l9 7-4 1 4 8-3 1-3-8-3 3z" /></g> },
  { label: "Select by net", tone: "orange", art: <g><path d="M8 3v20M8 26h8V10h10" {...K} /><circle cx="8" cy="18" r="2.500" fill="#e02020" stroke="#000" /><circle cx="7" cy="26" r="2.500" fill="#20c040" stroke="#000" /><circle cx="25" cy="9" r="2.500" fill="#20c040" stroke="#000" /><path d="M20 13l8 6-4 1 4 6-2 2-4-7-2 2z" /></g> },
];

const tri = {
  out: "M11 1l4 5H7zM11 21l4-5H7zM1 11l5-4v8zM21 11l-5-4v8z",
  in: "M11 7l5-5H6zM11 15l5 5H6zM7 11L2 6v10zM15 11l5-5v10z",
};
const popTools: [string, React.ReactNode][] = [
  ["Link view", <g key="a" {...K}><rect x="3" y="8" width="9" height="9" strokeWidth={2} /><rect x="14" y="2" width="5" height="6" /><path d="M16 8v5h-8M10 11l-3 2 3 2" /></g>],
  ["Pan up", <g key="b"><rect x="4" y="10" width="14" height="8" {...K} strokeWidth={2} /><path d="M11 3l5 5h-2v6H8V8H6z" /></g>],
  ["Pan down", <g key="c"><rect x="4" y="3" width="14" height="9" {...K} strokeWidth={2} /><path d="M11 19l5-5h-2V8H8v6H6z" /></g>],
  ["Pan left", <g key="d"><rect x="9" y="3" width="9" height="15" {...K} strokeWidth={2} /><path d="M2 11l5-5v2h6v6H7v2z" /></g>],
  ["Pan right", <g key="e"><rect x="4" y="3" width="9" height="15" {...K} strokeWidth={2} /><path d="M20 11l-5-5v2H9v6h6v2z" /></g>],
  ["Zoom in", <g key="f"><rect x="9" y="9" width="4" height="4" {...K} strokeWidth={2} /><path d={tri.in} /></g>],
  ["Zoom out", <g key="g"><rect x="9" y="9" width="4" height="4" {...K} /><path d={tri.out} /></g>],
];

const HandMark = () => (
  <svg width="10" height="9" viewBox="0 0 10 9"><path d="M1 4h2l3-4 1 1-1 2h2v4L6 9H2z" /></svg>
);
const GridMark = () => (
  <svg width="8" height="8" viewBox="0 0 8 8"><path d="M1.500 1.500h4v4h-4zM3.500 1v5M1 3.500h5" {...K} /></svg>
);

const shell = (
  <svg width="34" height="32" viewBox="0 0 34 32">
    <path d="M17 30C10 28 2 20 2 12c1-6 8-10 15-10s14 4 15 10c0 8-7 15-15 18z" fill="#f4c46a" stroke="#d89430" />
    <path d="M17 29L5 9M17 29L10 4M17 29V2M17 29l7-25M17 29L29 9" stroke="#fff0c8" strokeWidth="1.600" />
    <path d="M21 12l2 5 6 0-4 4 2 6-6-3-5 3 1-6-4-4 6-1z" fill="#e8862a" stroke="#b45a10" />
  </svg>
);
const note = (
  <svg width="27" height="30" viewBox="0 0 27 30">
    <rect x="1" y="1" width="24" height="28" fill="#eefaff" stroke="#8cc8e0" />
    <path d="M4 6h18M4 10h18M4 14h18M4 18h18M4 22h18M4 26h18" stroke="#2c88b8" strokeWidth="2" />
  </svg>
);
const gee = (
  <svg width="30" height="32" viewBox="0 0 30 32">
    <path d="M28 1c-1 6-7 8-13 8-4 1-7 5-7 9 0 5 6 7 9 4v-2h-3l1-5h12l-3 12c-7 6-21 3-22-8C2 9 10 4 18 4c4 0 7-1 10-3z" fill="#d42a18" stroke="#801008" />
  </svg>
);
const floppy = (
  <svg width="32" height="32" viewBox="0 0 32 32">
    <path d="M1 1h28l2 3v27H1z" fill="#2038b8" stroke="#101860" />
    <rect x="9" y="1" width="15" height="10" fill="#c8d4ec" /><rect x="17" y="2" width="4" height="8" fill="#203080" />
    <rect x="5" y="14" width="22" height="17" fill="#fff" />
    <path d="M7 18h18M7 22h18M7 26h8" stroke="#d04050" />
    <text x="17" y="30" fontFamily="Liberation Sans, sans-serif" fontSize="8" fill="#222">64</text>
  </svg>
);
const bird = (
  <svg width="30" height="30" viewBox="0 0 30 30">
    <rect width="30" height="30" rx="6" fill="#1490ff" />
    <path d="M8 5c4 5 13 6 14 11 0 3-2 5-4 5l1 1-7 6 1-6c-2-1-3-3-3-5l2 0c-3-3-4-7-3-12z" fill="#fff" />
  </svg>
);
const pee = (
  <svg width="32" height="32" viewBox="0 0 32 32">
    <path d="M6 2h19v7" fill="none" stroke="#108a3c" strokeWidth="1.500" />
    <path d="M14 9h8c10 1 10 15 0 16h-5l-6 6h-3l4-22z" fill="#108a3c" />
    <path d="M17 13h4c4 1 4 7 0 8h-5z" fill="#3c5880" />
    <path d="M6 6h9M5 10h7M4 14h7M5 18h5" stroke="#108a3c" strokeWidth="2" />
  </svg>
);
const excel = (
  <svg width="32" height="32" viewBox="0 0 32 32">
    <path d="M3 3h20l7 10v17H8z" fill="#f0f8e8" stroke="#68a040" />
    <path d="M3 3l19 0-2 14H4z" fill="#dff0d0" stroke="#58963c" />
    <path d="M14 17h15M14 22h15M14 27h15M19 13v17M25 10v20" stroke="#4c9030" strokeWidth="2" />
    <path d="M7 9l10 12M17 8L7 22" stroke="#257020" strokeWidth="4" />
  </svg>
);
const word = (
  <svg width="32" height="32" viewBox="0 0 32 32">
    <path d="M4 2h17l8 9v20H8z" fill="#f4f8ff" stroke="#5078b8" />
    <path d="M2 4l18 2v16L2 24z" fill="#dce8fa" stroke="#4870b0" />
    <path d="M5 9l2 11 4-9 3 9 3-11" fill="none" stroke="#20489c" strokeWidth="3" />
    <path d="M20 12h7M20 16h7M20 20h7M13 25h14" stroke="#3a66b0" strokeWidth="2" />
  </svg>
);
const genesis = (
  <svg width="34" height="28" viewBox="0 0 34 28">
    <path d="M20 26l12-5-2 5-8 2z" fill="#7a8098" />
    <ellipse cx="17" cy="16" rx="14" ry="9" fill="#20948c" stroke="#56608c" strokeWidth="1.500" transform="rotate(12 17 16)" />
    <ellipse cx="17" cy="16" rx="11" ry="7" fill="none" stroke="#48d8c4" strokeWidth="2" strokeDasharray="5 3" />
    <ellipse cx="18" cy="16" rx="7" ry="5" fill="#147c6c" stroke="#d0e050" strokeWidth="1.500" />
    <ellipse cx="19" cy="13" rx="2" ry="2" fill="#e8e040" stroke="#084038" />
    <path d="M1 3l9-3 3 5-8 4z" fill="#28a89c" />
  </svg>
);
const exceed = (
  <svg width="32" height="30" viewBox="0 0 32 30">
    <path d="M3 1l20 27M29 1L3 29" stroke="#fff" strokeWidth="4" />
    <path d="M2 1h8l20 27h-8z" fill="#701878" /><path d="M28 1L3 29" stroke="#701878" strokeWidth="2.500" />
  </svg>
);

const tasks: { label: string; icon: React.ReactNode; active?: boolean; stack?: boolean }[] = [
  { label: "Shell", icon: shell },
  { label: "Notes", icon: note },
  { label: "G", icon: gee },
  { label: "Save", icon: floppy },
  { label: "Bird", icon: bird },
  { label: "P", icon: pee },
  { label: "Excel", icon: excel, stack: true },
  { label: "Word", icon: word },
  { label: "Genesis", icon: genesis },
  { label: "Exceed", icon: exceed, active: true, stack: true },
  { label: "Genesis 2", icon: genesis },
];

const menus: [string, number][] = [
  ["File", 0], ["Edit", 0], ["Actions", 0], ["Options", 1], ["Analysis", -1], ["DFM", -1], ["Step", 0], ["Rout", 0], ["Windows", 0],
];

export default function App() {
  return (
    <Desktop>
      <Global />
      <EditorWindow>
        <TitleBar>
          <TitleText><XAppIcon />Graphic Editor 9.07b2 (00@HY-HYCAM-PC411 - Windows, pid:6428)</TitleText>
          <WindowControls>
            <WindowControl aria-label="Minimize"><svg width="12" height="9"><rect x="0" y="3" width="11" height="4" fill="#fff" stroke="#445" /></svg></WindowControl>
            <WindowControl aria-label="Maximize"><svg width="12" height="9"><rect x="2" y="-3" width="8" height="8" fill="none" stroke="#fff" strokeWidth="2" /></svg></WindowControl>
            <WindowControl $close aria-label="Close window"><svg width="12" height="9"><path d="M1 -4l9 11M10 -4l-9 11" stroke="#fff" strokeWidth="2.500" /></svg></WindowControl>
          </WindowControls>
        </TitleBar>

        <Header>
          <MenuBar>
            {menus.map(([t, u]) => (
              <MenuItem key={t}>{u < 0 ? t : <>{t.slice(0, u)}<u>{t[u]}</u>{t.slice(u + 1)}</>}</MenuItem>
            ))}
            <MenuItem $end>Help</MenuItem>
          </MenuBar>
          <Brand>
            <Logo />
            <Product>Genesis 2000</Product>
            <Stamp>16 Jan 2023<br />10:54 AM</Stamp>
          </Brand>
        </Header>

        <Body>
          <Side>
            <JobInfo>
              <JobLine>Job : cg0yy008a0</JobLine>
              <JobLine>Step: cam</JobLine>
            </JobInfo>
            <MatrixFrame><MatrixButton>Job Matrix ...</MatrixButton></MatrixFrame>
            <LayerArea>
              <LayerPanel>
                {layerGroups.map((g, i) => (
                  <LayerGroup key={i}>
                    {g.map((l) => (
                      <LayerRow key={l.name}>
                        <LayerTick type="checkbox" id={`layer-${l.name}`} defaultChecked={l.on} />
                        <Swatch $color={l.color} />
                        <LayerName $bg={l.bg || c.aqua} htmlFor={`layer-${l.name}`}>
                          {l.name}
                          {l.mark === "hand" && <HandMark />}
                          {l.mark === "grid" && <GridMark />}
                        </LayerName>
                      </LayerRow>
                    ))}
                  </LayerGroup>
                ))}
              </LayerPanel>
            </LayerArea>
            <Selected>Selected : 0</Selected>
          </Side>

          <Board><BoardDrawing /></Board>

          <Dock>
            <ToolBox>
              {tools.map((t, i) => (
                <Tool key={t.label} $tone={t.tone} $gap={i >= 8} aria-label={t.label}>
                  <svg width="30" height="30" viewBox="0 0 30 30">
                    <rect x=".5" y=".5" width="29" height="29" {...K} />
                    {t.art}
                  </svg>
                </Tool>
              ))}
            </ToolBox>
            <Overview><OverviewDrawing /></Overview>
            <Coords>{"X = 30.254085mm\nY = 127.487115mm"}</Coords>
          </Dock>
        </Body>

        <CommandBar>
          <CommandButton aria-label="Snap line"><svg width="20" height="20" viewBox="0 0 20 20"><rect x=".5" y=".5" width="19" height="19" {...K} /><path d="M4 5l11 11M4 9V5h4M3 17h13" {...K} /></svg></CommandButton>
          <CommandButton aria-label="Snap angle"><svg width="20" height="20" viewBox="0 0 20 20"><rect x=".5" y=".5" width="19" height="19" {...K} /><path d="M16 3L4 16h12M6 4v5M11 12l4 4M15 12l-4 4" {...K} /></svg></CommandButton>
          <CommandButton $framed aria-label="Grid"><svg width="18" height="18" viewBox="0 0 18 18"><rect x=".5" y=".5" width="17" height="17" {...K} /><path d="M6 3h9v12H3V7zM9 3v12M3 9h12" {...K} /></svg></CommandButton>
          <EntryField>
            <label htmlFor="xy">X Y :</label>
            <input id="xy" type="text" />
          </EntryField>
          <CommandButton $framed aria-label="Alert"><svg width="16" height="18" viewBox="0 0 16 18"><rect x=".5" y=".5" width="15" height="17" {...K} /><path d="M8 3v8M8 13v2" {...K} strokeWidth={2} /></svg></CommandButton>
          <Prompt>&lt;M1&gt; - Select first area corner</Prompt>
          <UnitFrame>
            <UnitPick>
              <select aria-label="Units" defaultValue="MM"><option>MM</option></select>
            </UnitPick>
          </UnitFrame>
        </CommandBar>
        <MessageBar><MessageField /></MessageBar>
      </EditorWindow>

      <Taskbar>
        <StartButton aria-label="Start">
          <svg width="38" height="38" viewBox="0 0 38 38">
            <defs>
              <radialGradient id="orb" cx=".5" cy=".9" r=".9"><stop offset="0" stopColor="#48d8f0" /><stop offset=".5" stopColor="#1c5c98" /><stop offset="1" stopColor="#a8c4dc" /></radialGradient>
            </defs>
            <circle cx="19" cy="19" r="18" fill="url(#orb)" stroke="#0c2850" />
            <path d="M9 11c3-2 6-2 9 0l-2 8c-3-2-6-2-9 0z" fill="#f0602a" />
            <path d="M19 11c3 2 6 2 10 0l-2 8c-3 2-7 2-10 0z" fill="#8cc83c" />
            <path d="M7 20c3-2 6-2 9 0l-2 8c-3-2-6-2-8 0z" fill="#4aa8ec" />
            <path d="M17 20c3 2 6 2 10 0l-3 8c-3 2-6 2-9 0z" fill="#fcc838" />
          </svg>
        </StartButton>
        <TaskList>
          {tasks.map((t) => (
            <TaskButton key={t.label} $active={t.active} $stack={t.stack} aria-label={t.label}>{t.icon}</TaskButton>
          ))}
        </TaskList>
        <Tray>
          <svg width="8" height="5"><path d="M0 5l4-4 4 4z" fill="#fff" /></svg>
          <svg width="16" height="16" viewBox="0 0 16 16"><path d="M2 1v14" stroke="#fff" strokeWidth="1.500" /><path d="M3 2h5l1 1h5v6H8L7 8H3z" fill="#fff" /><circle cx="11" cy="11" r="4.500" fill="#d83028" /><path d="M9 9l4 4M13 9l-4 4" stroke="#fff" strokeWidth="1.500" /></svg>
          <svg width="16" height="16" viewBox="0 0 16 16"><path d="M1 5h2l4-4v14l-4-4H1z" fill="#fff" /><path d="M9 5c1 2 1 4 0 6M11 4c2 3 2 5 0 8M13 2c3 4 3 8 0 12" stroke="#fff" fill="none" /></svg>
          <svg width="16" height="16" viewBox="0 0 16 16"><path d="M5 5h9v7H5zM9 12v2M6 14.500h7" stroke="#fff" strokeWidth="1.500" fill="none" /><path d="M1 2v4h3V2M2.500 6v7h3" stroke="#fff" fill="none" /></svg>
        </Tray>
        <Clock>11:09<br />2023/1/16</Clock>
        <ShowDesktop aria-label="Show desktop" />
      </Taskbar>

      <LanguageBar>
        <svg width="9" height="18" viewBox="0 0 9 18"><path d="M1 1v17M4 1v17M7 1v17" stroke="#20282c" strokeWidth="2" strokeDasharray="2 2" /></svg>
        <svg width="15" height="12" viewBox="0 0 15 12"><rect x=".5" y="3.500" width="14" height="8" fill="#e4e4e4" stroke="#777" /><path d="M2 6h11M2 8h11M4 10h7" stroke="#777" strokeDasharray="1 1" /><path d="M3 3c2-3 6 0 9-3" stroke="#666" fill="none" /></svg>
        <svg width="16" height="16" viewBox="0 0 16 16"><circle cx="8" cy="8" r="7" fill="#1018b0" stroke="#d0d8f0" /><path d="M5.500 6c0-3 5-3 5 0 0 2-2.500 1.500-2.500 4M8 11v2" stroke="#fff" strokeWidth="1.800" fill="none" /></svg>
        <svg width="6" height="16" viewBox="0 0 6 16"><path d="M0 3h6v2H0zM0 12h6l-3 3z" fill="#fff" /></svg>
      </LanguageBar>

      <PopWindow aria-label="Popview - 1">
        <PopTitle>
          <PopTitleText><XAppIcon />Popview - 1</PopTitleText>
          <PopClose aria-label="Close popview"><svg width="10" height="10" viewBox="0 0 10 10"><path d="M1 1l8 8M9 1L1 9" stroke="#445460" strokeWidth="3.500" /><path d="M1 1l8 8M9 1L1 9" stroke="#fff" strokeWidth="2" /></svg></PopClose>
        </PopTitle>
        <PopContent>
          <PopMain>
            <PopView><PopDrawing /></PopView>
            <PopTools>
              {popTools.map(([label, art]) => (
                <PopTool key={label} aria-label={label}>
                  <span>
                    <svg width="21" height="21" viewBox="0 0 22 22"><rect x=".5" y=".5" width="21" height="21" {...K} />{art}</svg>
                  </span>
                </PopTool>
              ))}
            </PopTools>
          </PopMain>
          <CloseFrame><button>Close</button></CloseFrame>
        </PopContent>
      </PopWindow>
    </Desktop>
  );
}
